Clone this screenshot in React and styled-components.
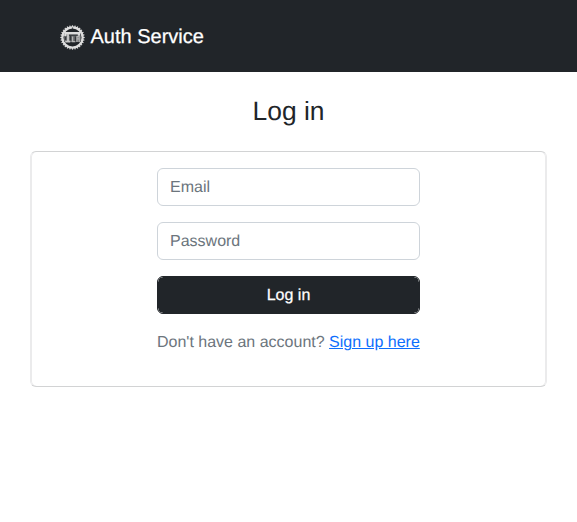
import React from "react";
import styled, { createGlobalStyle } from "styled-components";

const GlobalStyle = createGlobalStyle`
  *, *::before, *::after { box-sizing: border-box; }
  body {
    margin: 0;
    background: #fff;
    color: #212529;
    font: 400 16px/1.5 "Liberation Sans", Arial, sans-serif;
    text-rendering: geometricPrecision;
  }
`;

const Navbar = styled.header`
  height: 72px;
  padding: 0 60px;
  display: flex;
  align-items: center;
  background: #212529;
`;

const Brand = styled.a`
  display: flex;
  align-items: center;
  gap: 5.5px;
  color: #fff;
  font-size: 20px;
  line-height: 30px;
  text-decoration: none;
  -webkit-text-stroke: 0.25px #fff;
`;

const BrandName = styled.span`
  padding-top: 2px;
`;

const BrandIcon = styled.svg`
  width: 25px;
  height: 25px;
  margin-top: 3px;
`;

const Main = styled.main`
  padding: 24px 30px;
`;

const Title = styled.h1`
  margin: 0 0 24px;
  font-size: 26.4px;
  font-weight: 400;
  line-height: 31px;
  text-align: center;
`;

const Card = styled.section`
  height: 236px;
  padding: 16px;
  display: flex;
  justify-content: center;
  border: 1px solid #d2d3d4;
  border-left-color: #ebebec;
  border-right-color: #ebebec;
  border-radius: 6px;
  box-shadow: inset 1px 0 #ebebec, inset -1px 0 #ebebec;
`;

const Form = styled.form`
  width: 263px;
  display: flex;
  flex-direction: column;
  gap: 16px;
`;

const Input = styled.input`
  height: 38px;
  padding: 7px 12px 5px;
  border: 1px solid #ced4da;
  border-radius: 6px;
  font: inherit;
  text-rendering: inherit;
  &::placeholder { color: #6c757d; opacity: 1; }
`;

const SubmitButton = styled.button`
  height: 38px;
  padding: 7px 12px 5px;
  border: 1px solid #212529;
  border-radius: 6px;
  background:
    radial-gradient(circle at 100% 100%, transparent 4.3px, #c5c7c8 4.9px) 0 0 / 5px 5px no-repeat,
    radial-gradient(circle at 0 100%, transparent 4.3px, #c5c7c8 4.9px) 100% 0 / 5px 5px no-repeat,
    radial-gradient(circle at 100% 0, transparent 4.3px, #c5c7c8 4.9px) 0 100% / 5px 5px no-repeat,
    radial-gradient(circle at 0 0, transparent 4.3px, #c5c7c8 4.9px) 100% 100% / 5px 5px no-repeat,
    #212529;
  color: #fff;
  font: inherit;
  text-rendering: inherit;
  -webkit-text-stroke: 0.25px #fff;
`;

const Hint = styled.p`
  margin: 0;
  padding-top: 1px;
  color: #6c757d;
  white-space: nowrap;
`;

const Link = styled.a`
  color: #0d6efd;
  text-decoration: underline;
`;

const teeth = Array.from({ length: 28 }, (_, i) => (i * 360) / 28);

function GearLogo() {
  return (
    <BrandIcon viewBox="0 0 25 25" fill="none" stroke="#ddd">
      <circle cx="12.5" cy="12.5" r="10.1" strokeWidth="2.2" />
      {teeth.map((a) => (
        <path key={a} d="M12.5 0.3V2.6" strokeWidth="1.2" transform={`rotate(${a} 12.5 12.5)`} />
      ))}
      <circle cx="12.5" cy="3.1" r="0.7" fill="#212529" stroke="none" />
      <path d="M4 13.8h17" stroke="#66696b" strokeWidth="6.5" />
      <path d="M5 8.3h14v2.4M5.4 8.3v2.6" strokeWidth="2.4" />
      <path d="M8 9v8M5.3 16.6h5" stroke="#c8c8c8" strokeWidth="1.9" />
      <path d="M12.6 11.5v5M11.6 16.6h3.8M17 11.6h2.2v2.2h-2.2zM17 12v5M19.2 14.5v2.5" stroke="#b5b5b5" strokeWidth="1.2" />
      <path d="M10.6 10.5v5M15.4 11.5v5M5.4 12v3" stroke="#303337" strokeWidth="1" />
    </BrandIcon>
  );
}

export default function App() {
  return (
    <>
      <GlobalStyle />
      <Navbar>
        <Brand href="#"><GearLogo /><BrandName>Auth Service</BrandName></Brand>
      </Navbar>
      <Main>
        <Title>Log in</Title>
        <Card>
          <Form>
            <Input type="email" placeholder="Email" />
            <Input type="password" placeholder="Password" />
            <SubmitButton type="button">Log in</SubmitButton>
            <Hint>Don't have an account? <Link href="#">Sign up here</Link></Hint>
          </Form>
        </Card>
      </Main>
    </>
  );
}
